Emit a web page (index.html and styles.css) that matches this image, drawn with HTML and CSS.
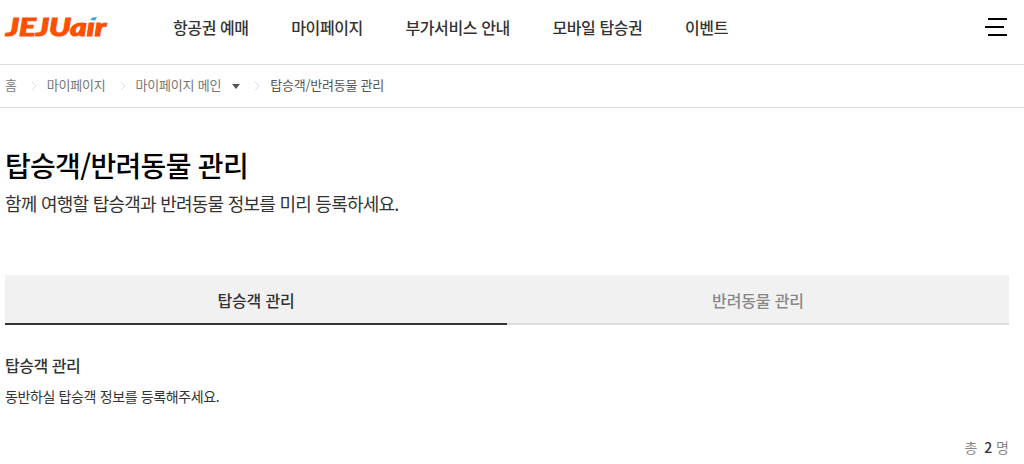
FILE: index.html
```html
<!DOCTYPE html>
<html lang="ko">
  <head>
    <meta charset="UTF-8" />
    <meta name="viewport" content="width=device-width, initial-scale=1.0" />
    <title>탑승객/반려동물 관리</title>
    <link rel="stylesheet" href="styles.css">
  </head>
  <body>
    <header class="header">
      <a href="#" class="logo">
        <svg width="104" height="30" viewBox="0 0 104 30">
          <text class="logo-text" x="1" y="20.5" textLength="100" lengthAdjust="spacingAndGlyphs">JEJUaır</text>
          <path class="logo-wing" d="M85 5 L87.5 2.5 L92 2 L90 5.5 Z" />
        </svg>
      </a>
      <nav class="gnb">
        <a href="#">항공권 예매</a>
        <a href="#">마이페이지</a>
        <a href="#">부가서비스 안내</a>
        <a href="#">모바일 탑승권</a>
        <a href="#">이벤트</a>
      </nav>
      <a href="#" class="menu">
        <span></span>
        <span class="mid"></span>
        <span></span>
      </a>
    </header>
    <div class="location">
      <a href="#">홈</a>
      <svg class="next" width="6" height="10" viewBox="0 0 6 10"><path d="M0.7 0.7 L5 5 L0.7 9.3" /></svg>
      <a href="#">마이페이지</a>
      <svg class="next" width="6" height="10" viewBox="0 0 6 10"><path d="M0.7 0.7 L5 5 L0.7 9.3" /></svg>
      <a href="#" class="select">마이페이지 메인<i class="caret"></i></a>
      <svg class="next" width="6" height="10" viewBox="0 0 6 10"><path d="M0.7 0.7 L5 5 L0.7 9.3" /></svg>
      <span class="current">탑승객/반려동물 관리</span>
    </div>
    <div class="container">
      <h1>탑승객/반려동물 관리</h1>
      <p class="lead">함께 여행할 탑승객과 반려동물 정보를 미리 등록하세요.</p>
      <div class="tabs">
        <a href="#" class="on">탑승객 관리</a>
        <a href="#">반려동물 관리</a>
      </div>
      <h2>탑승객 관리</h2>
      <p class="desc">동반하실 탑승객 정보를 등록해주세요.</p>
      <p class="total">총 <b>2</b> 명</p>
    </div>
  </body>
</html>
```
FILE: styles.css
```css
* {
  margin: 0;
  padding: 0;
  box-sizing: border-box;
  text-decoration: none;
}
body {
  font-family: "Noto Sans CJK KR", sans-serif;
  color: #333;
  background: #fff;
  overflow: hidden;
}
a {
  color: inherit;
}
.header {
  display: flex;
  height: 65px;
  padding: 0 17px 0 5px;
  border-bottom: 1px solid #ddd;
}
.logo {
  width: 168px;
  height: 30px;
  margin-top: 15px;
}
.logo svg {
  display: block;
  overflow: visible;
}
.logo-text {
  font: italic 900 24px "Lato", sans-serif;
  fill: #ff5000;
  stroke: #ff5000;
  stroke-width: 1px;
}
.logo-wing {
  fill: #3aa5dc;
}
.gnb {
  display: flex;
  gap: 42.6px;
  font-size: 16px;
  font-weight: 500;
  line-height: 24px;
  letter-spacing: -0.4px;
  margin-top: 15px;
}
.menu {
  width: 22px;
  height: 18px;
  margin: 18px 0 0 auto;
  display: flex;
  flex-direction: column;
  align-items: flex-end;
  justify-content: space-between;
}
.menu span {
  width: 19px;
  height: 2px;
  background: #000;
}
.menu .mid {
  margin-right: 3px;
}
.location {
  display: flex;
  align-items: center;
  height: 43px;
  padding: 0 5px 3px;
  border-bottom: 1px solid #ddd;
  font-size: 13px;
  letter-spacing: -0.2px;
  color: #767676;
}
.next {
  margin: 3px 10px 0 14px;
  fill: none;
  stroke: #ddd;
}
.select {
  display: flex;
  align-items: center;
}
.caret {
  margin: 3px 0 0 11px;
  border: 4px solid transparent;
  border-top: 5px solid #555;
  border-bottom: 0;
}
.current {
  color: #555;
  letter-spacing: -0.25px;
}
.container {
  padding: 36px 15px 0 5px;
}
h1 {
  font-size: 28px;
  font-weight: 500;
  line-height: 42px;
  letter-spacing: -0.7px;
  color: #000;
}
.lead {
  margin-top: 4px;
  font-size: 18px;
  line-height: 27px;
  letter-spacing: -0.75px;
}
.tabs {
  display: flex;
  margin-top: 58px;
}
.tabs a {
  flex: 1;
  height: 50px;
  line-height: 50px;
  text-align: center;
  font-size: 16px;
  font-weight: 500;
  letter-spacing: -0.15px;
  color: #888;
  background: #f1f1f1;
  border-bottom: 2px solid #ddd;
}
.tabs .on {
  color: #333;
  border-color: #333;
}
h2 {
  margin-top: 28px;
  font-size: 16px;
  font-weight: 500;
  line-height: 24px;
  letter-spacing: -0.45px;
}
.desc {
  margin-top: 9px;
  font-size: 14px;
  line-height: 21px;
  letter-spacing: -0.37px;
}
.total {
  margin-top: 30px;
  font-size: 14px;
  line-height: 21px;
  text-align: right;
  color: #888;
}
.total b {
  margin-left: 3px;
  font-weight: 500;
  color: #333;
}
```
